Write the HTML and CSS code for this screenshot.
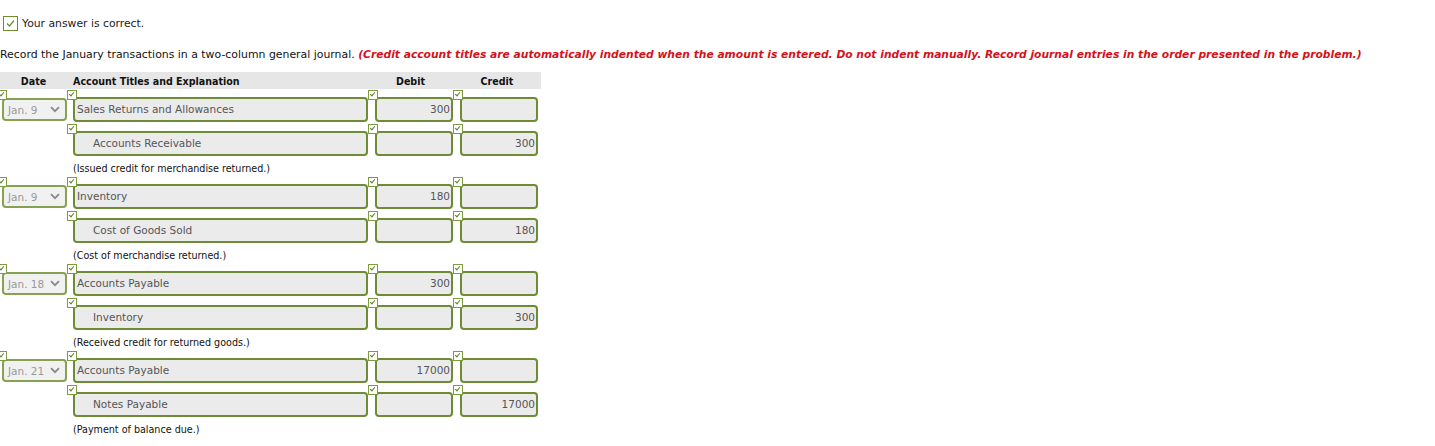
FILE: index.html
```html
<!DOCTYPE html>
<html>
<head>
<meta charset="utf-8">
<link rel="stylesheet" href="styles.css">
</head>
<body>
<div class="status">
  <span class="okbox"><svg width="11" height="11" viewBox="0 0 11 11"><path d="M2 5.5 L4.5 8 L9 2.5" fill="none" stroke="#6b8e23" stroke-width="1.2"/></svg></span>
  <span>Your answer is correct.</span>
</div>
<p class="instr">Record the January transactions in a two-column general journal. <em class="note">(Credit account titles are automatically indented when the amount is entered. Do not indent manually. Record journal entries in the order presented in the problem.)</em></p>

<div class="journal">
  <div class="jhead">
    <div class="hc center">Date</div>
    <div class="hc">Account Titles and Explanation</div>
    <div class="hc center">Debit</div>
    <div class="hc center">Credit</div>
  </div>

  <div class="entry">
    <div class="jrow">
      <div class="cell datecell"><span class="badge"></span><div class="sel"><span>Jan. 9</span><svg class="chev" width="10" height="7" viewBox="0 0 10 7"><path d="M1 1.2 L5 5.2 L9 1.2" fill="none" stroke="#8a8a8a" stroke-width="1.8"/></svg></div></div>
      <div class="cell acct"><span class="badge"></span><div class="inp">Sales Returns and Allowances</div></div>
      <div class="cell amt"><span class="badge"></span><div class="inp num">300</div></div>
      <div class="cell amt"><span class="badge"></span><div class="inp num"></div></div>
    </div>
    <div class="jrow">
      <div class="cell datecell"></div>
      <div class="cell acct"><span class="badge"></span><div class="inp indent">Accounts Receivable</div></div>
      <div class="cell amt"><span class="badge"></span><div class="inp num"></div></div>
      <div class="cell amt"><span class="badge"></span><div class="inp num">300</div></div>
    </div>
    <div class="expl">(Issued credit for merchandise returned.)</div>
  </div>

  <div class="entry">
    <div class="jrow">
      <div class="cell datecell"><span class="badge"></span><div class="sel"><span>Jan. 9</span><svg class="chev" width="10" height="7" viewBox="0 0 10 7"><path d="M1 1.2 L5 5.2 L9 1.2" fill="none" stroke="#8a8a8a" stroke-width="1.8"/></svg></div></div>
      <div class="cell acct"><span class="badge"></span><div class="inp">Inventory</div></div>
      <div class="cell amt"><span class="badge"></span><div class="inp num">180</div></div>
      <div class="cell amt"><span class="badge"></span><div class="inp num"></div></div>
    </div>
    <div class="jrow">
      <div class="cell datecell"></div>
      <div class="cell acct"><span class="badge"></span><div class="inp indent">Cost of Goods Sold</div></div>
      <div class="cell amt"><span class="badge"></span><div class="inp num"></div></div>
      <div class="cell amt"><span class="badge"></span><div class="inp num">180</div></div>
    </div>
    <div class="expl">(Cost of merchandise returned.)</div>
  </div>

  <div class="entry">
    <div class="jrow">
      <div class="cell datecell"><span class="badge"></span><div class="sel"><span>Jan. 18</span><svg class="chev" width="10" height="7" viewBox="0 0 10 7"><path d="M1 1.2 L5 5.2 L9 1.2" fill="none" stroke="#8a8a8a" stroke-width="1.8"/></svg></div></div>
      <div class="cell acct"><span class="badge"></span><div class="inp">Accounts Payable</div></div>
      <div class="cell amt"><span class="badge"></span><div class="inp num">300</div></div>
      <div class="cell amt"><span class="badge"></span><div class="inp num"></div></div>
    </div>
    <div class="jrow">
      <div class="cell datecell"></div>
      <div class="cell acct"><span class="badge"></span><div class="inp indent">Inventory</div></div>
      <div class="cell amt"><span class="badge"></span><div class="inp num"></div></div>
      <div class="cell amt"><span class="badge"></span><div class="inp num">300</div></div>
    </div>
    <div class="expl">(Received credit for returned goods.)</div>
  </div>

  <div class="entry">
    <div class="jrow">
      <div class="cell datecell"><span class="badge"></span><div class="sel"><span>Jan. 21</span><svg class="chev" width="10" height="7" viewBox="0 0 10 7"><path d="M1 1.2 L5 5.2 L9 1.2" fill="none" stroke="#8a8a8a" stroke-width="1.8"/></svg></div></div>
      <div class="cell acct"><span class="badge"></span><div class="inp">Accounts Payable</div></div>
      <div class="cell amt"><span class="badge"></span><div class="inp num">17000</div></div>
      <div class="cell amt"><span class="badge"></span><div class="inp num"></div></div>
    </div>
    <div class="jrow">
      <div class="cell datecell"></div>
      <div class="cell acct"><span class="badge"></span><div class="inp indent">Notes Payable</div></div>
      <div class="cell amt"><span class="badge"></span><div class="inp num"></div></div>
      <div class="cell amt"><span class="badge"></span><div class="inp num">17000</div></div>
    </div>
    <div class="expl">(Payment of balance due.)</div>
  </div>
</div>
</body>
</html>
```

FILE: styles.css
```css
html, body {
  margin: 0;
  padding: 0;
  background: #fff;
}
body {
  font-family: "DejaVu Sans", Verdana, sans-serif;
  font-size: 10.5px;
  color: #222;
}
.status {
  display: flex;
  align-items: center;
  gap: 4px;
  margin-top: 15px;
  padding-left: 3px;
  height: 16px;
  font-size: 10.8px;
}
.okbox {
  width: 13px;
  height: 13px;
  border: 1px solid #6f8f2f;
  background: #fff;
  display: flex;
  align-items: center;
  justify-content: center;
}
.okbox svg { display: block; }
.instr {
  margin: 16px 0 0 0;
  line-height: 16px;
  white-space: nowrap;
  color: #111;
  font-size: 10.9px;
}
.note {
  color: #d4111b;
  font-weight: bold;
  font-style: italic;
  font-size: 10.72px;
}
.journal {
  margin-top: 9px;
  width: 541px;
}
.jhead {
  display: grid;
  grid-template-columns: 67px 301px 85px 88px;
  background: #e6e6e6;
  height: 17px;
  align-items: center;
  font-family: "DejaVu Sans Condensed", "DejaVu Sans", sans-serif;
  font-weight: bold;
  font-size: 10.6px;
  color: #111;
}
.hc { padding-left: 6px; }
.hc.center { text-align: center; padding-left: 0; }
.jrow {
  display: grid;
  grid-template-columns: 67px 301px 85px 88px;
  height: 34px;
}
.cell {
  position: relative;
  padding-top: 8px;
  box-sizing: border-box;
}
.acct { padding-left: 6px; }
.amt { padding-left: 7px; }
.amt .inp { width: 78px; }
.badge {
  position: absolute;
  left: 0;
  top: 1px;
  width: 8px;
  height: 8px;
  border: 1px solid #7d9b40;
  background: #fff;
  z-index: 2;
}
.badge::after {
  content: "";
  position: absolute;
  left: 2px;
  top: 0px;
  width: 2px;
  height: 4px;
  border-right: 1px solid #5f7f25;
  border-bottom: 1px solid #5f7f25;
  transform: rotate(40deg);
}
.datecell .badge { left: -3px; }
.inp {
  height: 25px;
  box-sizing: border-box;
  border: 2px solid #6e8b35;
  border-radius: 4px;
  background: #ebebec;
  color: #555;
  line-height: 21px;
  padding: 0 3px 0 2px;
  white-space: nowrap;
  overflow: hidden;
}
.inp.indent { padding-left: 18px; }
.inp.num { text-align: right; padding-right: 1px; }
.sel {
  margin-left: 2px;
  margin-top: 1px;
  width: 65px;
  height: 23px;
  box-sizing: border-box;
  border: 2px solid #86a250;
  border-radius: 4px;
  background: #f1f1f1;
  color: #999;
  display: flex;
  align-items: center;
  justify-content: space-between;
  padding: 0 5px 0 4px;
}
.chev { display: block; }
.expl {
  height: 19px;
  line-height: 24px;
  padding-left: 73px;
  font-family: "DejaVu Sans Condensed", "DejaVu Sans", sans-serif;
  font-size: 10.65px;
  color: #111;
}
```
